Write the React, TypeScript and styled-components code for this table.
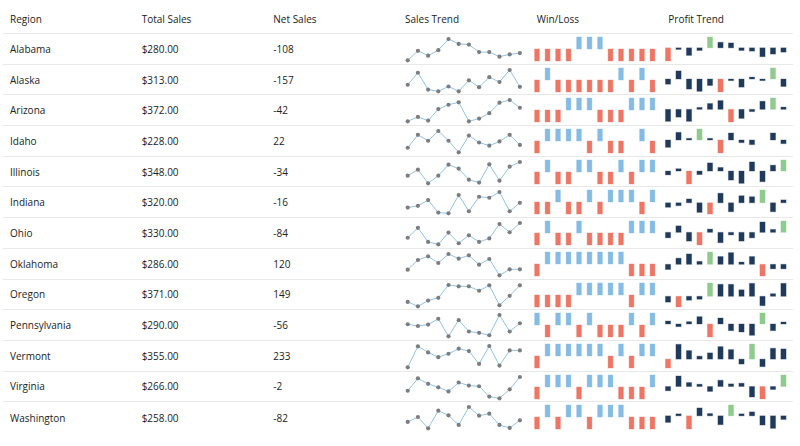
import React from 'react'
import styled, { createGlobalStyle } from 'styled-components'

const GlobalStyle = createGlobalStyle`
  body {
    margin: 0;
    background: #fff;
    font-family: 'Segoe UI', 'Open Sans', sans-serif;
    color: #222;
  }
`

const COL_W = 790 / 6
const ROW_H = 29.7

type Region = {
  name: string
  total: string
  net: number
  trend: number[]
  profit: number[]
}

// trend values are read off as screen y (smaller = higher)
const regions: Region[] = [
  { name: 'Alabama', total: '$280.00', net: -108, trend: [82, 53, 68, 51, 17, 32, 34, 57, 57, 71, 64, 60], profit: [-40, -3, -23, -8, 33, 17, 15, -8, -10, -27, -19, -13] },
  { name: 'Alaska', total: '$313.00', net: -157, trend: [153, 118, 167, 172, 158, 172, 140, 160, 131, 145, 110, 159], profit: [-16, 25, -31, -38, -20, -40, -4, -25, 6, -4, 34, -23] },
  { name: 'Arizona', total: '$372.00', net: -42, trend: [265, 252, 263, 229, 216, 209, 265, 257, 241, 210, 202, 225], profit: [-37, -24, -37, 6, 18, 27, -39, -28, -7, 25, 35, 7] },
  { name: 'Idaho', total: '$228.00', net: 22, trend: [342, 305, 322, 294, 322, 355, 307, 327, 336, 324, 305, 334], profit: [-22, 23, 5, 33, 5, -39, 21, -8, -14, 0, 21, -11] },
  { name: 'Illinois', total: '$348.00', net: -34, trend: [426, 408, 449, 426, 393, 405, 438, 447, 392, 441, 399, 385], profit: [-12, 7, -40, -11, 25, 11, -28, -38, 28, -33, 18, 34] },
  { name: 'Indiana', total: '$320.00', net: -16, trend: [524, 519, 502, 539, 541, 487, 535, 492, 495, 478, 535, 510], profit: [-14, -9, 12, -30, -35, 30, -28, 22, 19, 40, -28, 9] },
  { name: 'Ohio', total: '$330.00', net: -84, trend: [613, 584, 625, 632, 598, 629, 606, 625, 615, 573, 597, 570], profit: [-17, 20, -27, -39, 10, -32, -8, -27, -17, 32, 9, 35] },
  { name: 'Oklahoma', total: '$286.00', net: 120, trend: [153, 124, 113, 133, 106, 120, 110, 138, 121, 170, 152, 152], profit: [-16, 19, 32, 9, 38, 24, 36, 7, 24, -36, -14, -14] },
  { name: 'Oregon', total: '$371.00', net: 149, trend: [249, 262, 245, 237, 199, 203, 203, 216, 200, 259, 231, 200], profit: [-18, -33, -12, -9, 41, 37, 37, 20, 40, -29, 8, 40] },
  { name: 'Pennsylvania', total: '$290.00', net: -56, trend: [318, 323, 319, 302, 353, 306, 339, 343, 350, 291, 339, 315], profit: [9, -8, 7, 22, -39, 18, -20, -24, -34, 33, -20, 6] },
  { name: 'Vermont', total: '$355.00', net: 233, trend: [445, 383, 401, 415, 405, 390, 397, 435, 382, 440, 395, 395], profit: [-27, 45, 26, 9, 19, 38, 29, -15, 46, -23, 33, 31] },
  { name: 'Virginia', total: '$266.00', net: -2, trend: [515, 479, 495, 505, 517, 491, 500, 502, 532, 537, 511, 475], profit: [-13, 32, 12, 7, -15, 19, 8, 10, -32, -38, -9, 35] },
  { name: 'Washington', total: '$258.00', net: -82, trend: [611, 596, 630, 577, 591, 620, 566, 592, 586, 620, 629, 606], profit: [-20, 6, -40, 24, 7, -27, 33, 6, 12, -28, -38, -11] },
]

const Table = styled.div`
  width: 790px;
  margin-left: 3px;
`

const Row = styled.div<{ $header?: boolean; $last?: boolean }>`
  display: grid;
  grid-template-columns: repeat(6, 1fr);
  box-sizing: border-box;
  height: ${(p) => (p.$header ? '34px' : '30.7px')};
  border-bottom: ${(p) => (p.$last ? 'none' : '1px solid #e8e8e8')};
`

const Cell = styled.div<{ $header?: boolean }>`
  display: flex;
  align-items: center;
  padding: ${(p) => (p.$header ? '4px 7px 0' : '0 7px')};
  font-size: 10px;
  white-space: nowrap;
  overflow: hidden;
`

const ChartCell = styled.div`
  display: flex;
  align-items: flex-start;
  overflow: hidden;
`

const Chart = styled.svg`
  display: block;
  width: 100%;
  height: ${ROW_H}px;
`

const SalesTrend = ({ values }: { values: number[] }) => {
  const min = Math.min(...values)
  const max = Math.max(...values)
  const pts = values.map((v, i) => {
    const x = 9.7 + i * 10.2
    const y = 5 + ((v - min) / (max - min)) * 21.3
    return [x, y]
  })
  return (
    <Chart viewBox={`0 0 ${COL_W} ${ROW_H}`}>
      <polyline
        points={pts.map((p) => p.join(',')).join(' ')}
        fill="none"
        stroke="#8ec4ec"
        strokeWidth={1}
      />
      {pts.map(([x, y], i) => (
        <circle key={i} cx={x} cy={y} r={2.1} fill="#7d7d7d" />
      ))}
    </Chart>
  )
}

const WinLoss = ({ values }: { values: number[] }) => (
  <Chart viewBox={`0 0 ${COL_W} ${ROW_H}`}>
    {values.map((v, i) => {
      if (v === 0) return null
      const x = 7 + i * 10.5 - 2.4
      const win = v > 0
      const color = win ? '#85bce6' : '#ef7564'
      return (
        <rect
          key={i}
          x={x}
          y={win ? 3 : 15}
          width={4.8}
          height={12}
          fill={color}
          stroke={color}
          strokeOpacity={0.35}
          strokeWidth={1}
        />
      )
    })}
  </Chart>
)

const ProfitTrend = ({ values }: { values: number[] }) => {
  const lo = Math.min(0, ...values)
  const hi = Math.max(0, ...values)
  const min = Math.min(...values)
  const max = Math.max(...values)
  const scale = 24 / (hi - lo)
  const axis = 3 + hi * scale
  return (
    <Chart viewBox={`0 0 ${COL_W} ${ROW_H}`}>
      {values.map((v, i) => {
        if (v === 0) return null
        const h = Math.max(1.6, Math.abs(v) * scale)
        const y = v > 0 ? axis - h : axis
        const color = v === max ? '#8fcb8f' : v === min ? '#ef7564' : '#203a5c'
        return (
          <rect
            key={i}
            x={7 + i * 10.5 - 2.6}
            y={y}
            width={5.2}
            height={h}
            fill={color}
            stroke={color}
            strokeOpacity={0.3}
            strokeWidth={1}
          />
        )
      })}
    </Chart>
  )
}

const headers = ['Region', 'Total Sales', 'Net Sales', 'Sales Trend', 'Win/Loss', 'Profit Trend']

export default function App() {
  return (
    <>
      <GlobalStyle />
      <Table>
        <Row $header>
          {headers.map((h) => (
            <Cell $header key={h}>
              {h}
            </Cell>
          ))}
        </Row>
        {regions.map((r, idx) => (
          <Row key={r.name} $last={idx === regions.length - 1}>
            <Cell>{r.name}</Cell>
            <Cell>{r.total}</Cell>
            <Cell>{r.net}</Cell>
            <ChartCell>
              <SalesTrend values={r.trend} />
            </ChartCell>
            <ChartCell>
              <WinLoss values={r.profit} />
            </ChartCell>
            <ChartCell>
              <ProfitTrend values={r.profit} />
            </ChartCell>
          </Row>
        ))}
      </Table>
    </>
  )
}
